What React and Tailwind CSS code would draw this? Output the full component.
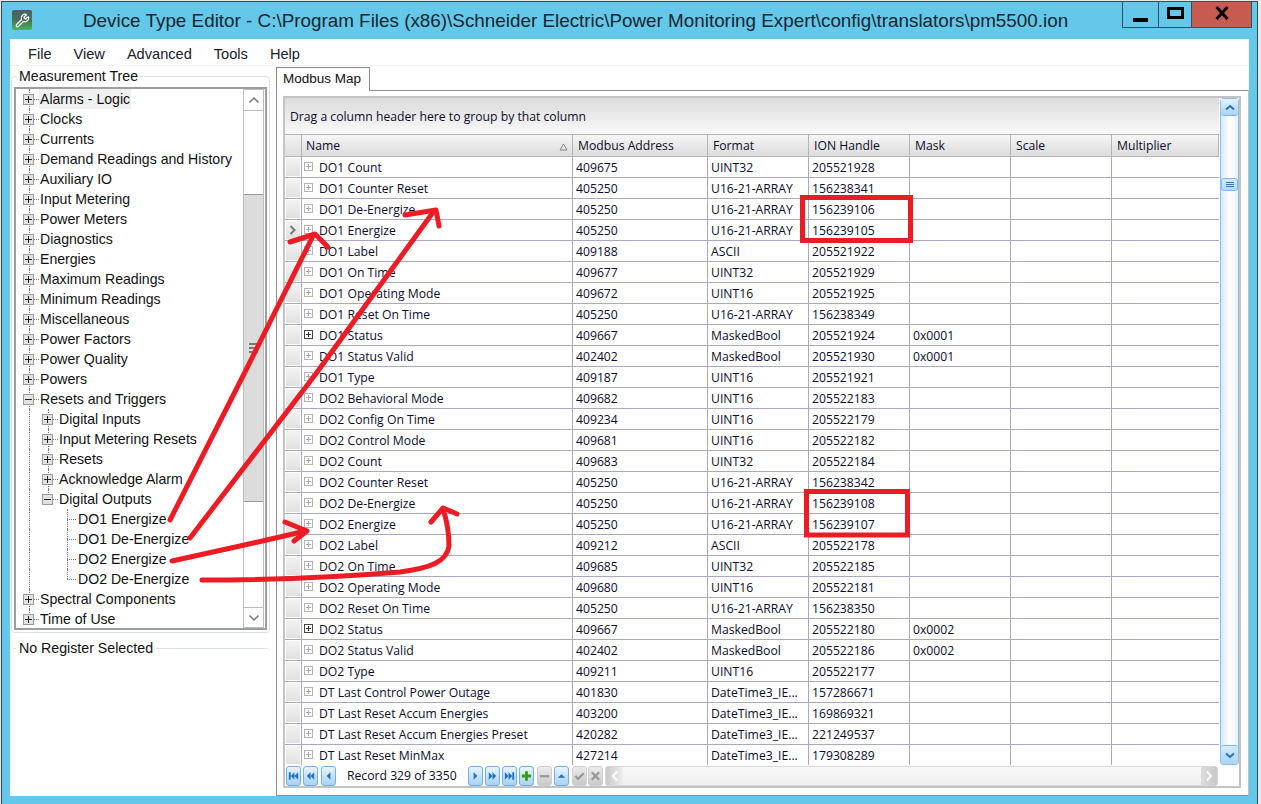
import React from 'react';
import { Wrench } from 'lucide-react';

const menus = ['File', 'View', 'Advanced', 'Tools', 'Help'];

const tree = [
    { label: 'Alarms - Logic', level: 0, icon: '+', selected: true },
    { label: 'Clocks', level: 0, icon: '+' },
    { label: 'Currents', level: 0, icon: '+' },
    { label: 'Demand Readings and History', level: 0, icon: '+' },
    { label: 'Auxiliary IO', level: 0, icon: '+' },
    { label: 'Input Metering', level: 0, icon: '+' },
    { label: 'Power Meters', level: 0, icon: '+' },
    { label: 'Diagnostics', level: 0, icon: '+' },
    { label: 'Energies', level: 0, icon: '+' },
    { label: 'Maximum Readings', level: 0, icon: '+' },
    { label: 'Minimum Readings', level: 0, icon: '+' },
    { label: 'Miscellaneous', level: 0, icon: '+' },
    { label: 'Power Factors', level: 0, icon: '+' },
    { label: 'Power Quality', level: 0, icon: '+' },
    { label: 'Powers', level: 0, icon: '+' },
    { label: 'Resets and Triggers', level: 0, icon: '-' },
    { label: 'Digital Inputs', level: 1, icon: '+' },
    { label: 'Input Metering Resets', level: 1, icon: '+' },
    { label: 'Resets', level: 1, icon: '+' },
    { label: 'Acknowledge Alarm', level: 1, icon: '+' },
    { label: 'Digital Outputs', level: 1, icon: '-', lastChild: true },
    { label: 'DO1 Energize', level: 2 },
    { label: 'DO1 De-Energize', level: 2 },
    { label: 'DO2 Energize', level: 2 },
    { label: 'DO2 De-Energize', level: 2, lastChild: true },
    { label: 'Spectral Components', level: 0, icon: '+' },
    { label: 'Time of Use', level: 0, icon: '+' },
];

const columns = [
    { name: 'Modbus Address', width: 'w-[135px]' },
    { name: 'Format', width: 'w-[101px]' },
    { name: 'ION Handle', width: 'w-[101px]' },
    { name: 'Mask', width: 'w-[101px]' },
    { name: 'Scale', width: 'w-[101px]' },
    { name: 'Multiplier', width: 'flex-1' },
];

const rows = [
    ['DO1 Count', '409675', 'UINT32', '205521928'],
    ['DO1 Counter Reset', '405250', 'U16-21-ARRAY', '156238341'],
    ['DO1 De-Energize', '405250', 'U16-21-ARRAY', '156239106'],
    ['DO1 Energize', '405250', 'U16-21-ARRAY', '156239105'],
    ['DO1 Label', '409188', 'ASCII', '205521922'],
    ['DO1 On Time', '409677', 'UINT32', '205521929'],
    ['DO1 Operating Mode', '409672', 'UINT16', '205521925'],
    ['DO1 Reset On Time', '405250', 'U16-21-ARRAY', '156238349'],
    ['DO1 Status', '409667', 'MaskedBool', '205521924', '0x0001'],
    ['DO1 Status Valid', '402402', 'MaskedBool', '205521930', '0x0001'],
    ['DO1 Type', '409187', 'UINT16', '205521921'],
    ['DO2 Behavioral Mode', '409682', 'UINT16', '205522183'],
    ['DO2 Config On Time', '409234', 'UINT16', '205522179'],
    ['DO2 Control Mode', '409681', 'UINT16', '205522182'],
    ['DO2 Count', '409683', 'UINT32', '205522184'],
    ['DO2 Counter Reset', '405250', 'U16-21-ARRAY', '156238342'],
    ['DO2 De-Energize', '405250', 'U16-21-ARRAY', '156239108'],
    ['DO2 Energize', '405250', 'U16-21-ARRAY', '156239107'],
    ['DO2 Label', '409212', 'ASCII', '205522178'],
    ['DO2 On Time', '409685', 'UINT32', '205522185'],
    ['DO2 Operating Mode', '409680', 'UINT16', '205522181'],
    ['DO2 Reset On Time', '405250', 'U16-21-ARRAY', '156238350'],
    ['DO2 Status', '409667', 'MaskedBool', '205522180', '0x0002'],
    ['DO2 Status Valid', '402402', 'MaskedBool', '205522186', '0x0002'],
    ['DO2 Type', '409211', 'UINT16', '205522177'],
    ['DT Last Control Power Outage', '401830', 'DateTime3_IE...', '157286671'],
    ['DT Last Reset Accum Energies', '403200', 'DateTime3_IE...', '169869321'],
    ['DT Last Reset Accum Energies Preset', '420282', 'DateTime3_IE...', '221249537'],
    ['DT Last Reset MinMax', '427214', 'DateTime3_IE...', '179308289'],
];

const BLUE = '#1f73c9';

const glyphs = {
    first: <path d="M2 3h2v8H2zM8 3v8L4 7zM12 3v8L8 7z" fill={BLUE} />,
    prevPage: <path d="M7 3v8L3 7zM11 3v8L7 7z" fill={BLUE} />,
    prev: <path d="M9 3v8L5 7z" fill={BLUE} />,
    next: <path d="M5 3v8l4-4z" fill={BLUE} />,
    nextPage: <path d="M3 3v8l4-4zM7 3v8l4-4z" fill={BLUE} />,
    last: <path d="M2 3v8l4-4zM6 3v8l4-4zM10 3h2v8h-2z" fill={BLUE} />,
    plus: <path d="M5.500 2h3v3.500H12v3H8.500V12h-3V8.500H2v-3h3.500z" fill="#3d9a12" />,
    minus: <path d="M2 6h10v2.500H2z" fill="#9a9a9a" />,
    up: <path d="M3 9l4-4 4 4z" fill={BLUE} />,
    check: <path d="M2.500 7l3 3 6-6" stroke="#9a9a9a" strokeWidth="2.500" fill="none" />,
    cross: <path d="M3 3l8 8M11 3l-8 8" stroke="#9a9a9a" strokeWidth="2.500" fill="none" />,
};

const NavButton = ({ glyph, gray, className = '' }) => (
    <div className={`w-[15px] h-[20px] rounded-[3px] border flex items-center justify-center shrink-0 ${gray ? 'border-[#d0d0d0] bg-gradient-to-b from-[#ececec] to-[#c9c9c9]' : 'border-[#6fb0ea] bg-gradient-to-b from-[#eaf4fd] to-[#a8d2f6]'} ${className}`}>
        <svg width="14" height="14" viewBox="0 0 14 14">{glyphs[glyph]}</svg>
    </div>
);

const Expander = ({ icon }) => (
    <span className="relative z-10 w-[11px] h-[11px] border border-[#9a9a9a] bg-[#e2e2e2] flex items-center justify-center shrink-0">
        <svg width="7" height="7" viewBox="0 0 7 7">
            <path d={icon === '+' ? 'M0 3.500h7M3.500 0v7' : 'M0 3.500h7'} stroke="#222" strokeWidth="1" />
        </svg>
    </span>
);

const TreeRow = ({ item, index }) => {
    const indent = item.level === 0 ? 'pl-[7px]' : item.level === 1 ? 'pl-[26px]' : 'pl-[61px]';
    const inResets = index > 15 && index <= 24;
    const inOutputs = index > 20 && index <= 24;
    return (
        <div className={`relative h-[20px] flex items-center ${indent}`}>
            {/* connector lines */}
            <span className={`absolute left-[13px] top-0 border-l border-dotted border-[#777] ${index === 26 ? 'h-[10px]' : 'h-[20px]'}`} />
            {inResets && index <= 20 && (
                <span className={`absolute left-[32px] top-0 border-l border-dotted border-[#777] ${index === 20 ? 'h-[10px]' : 'h-[20px]'}`} />
            )}
            {inOutputs && (
                <>
                    <span className={`absolute left-[51px] top-0 border-l border-dotted border-[#777] ${item.lastChild ? 'h-[10px]' : 'h-[20px]'}`} />
                    <span className="absolute left-[51px] top-[10px] w-[9px] border-t border-dotted border-[#777]" />
                </>
            )}
            {item.icon && <Expander icon={item.icon} />}
            {item.icon && <span className="w-[5px] border-t border-dotted border-[#777] shrink-0 relative z-10" />}
            <span className={`h-[20px] leading-[20px] px-[1px] text-[14.100px] text-[#111] whitespace-nowrap ${item.selected ? 'bg-[#f0f0f0]' : ''}`}>
                {item.label}
            </span>
        </div>
    );
};

const GridRow = ({ row, current }) => {
    const dark = row[0].endsWith('Status');
    return (
        <div className="h-[21px] flex border-b border-[#aaa8c2]">
            <div className="w-[17px] pl-[1px] pr-[1px] py-[1px] border-r border-[#aaa8c2] shrink-0">
                <div className="h-full bg-gradient-to-b from-[#f3f3f3] to-[#e1e1e1] flex items-center justify-center">
                    {current && (
                        <svg width="8" height="10" viewBox="0 0 8 10">
                            <path d="M1.500 1l4 4-4 4" stroke="#777" strokeWidth="2" fill="none" />
                        </svg>
                    )}
                </div>
            </div>
            <div className="w-[271px] flex items-center pl-[2px] pt-[2px] border-r border-[#aaa8c2] shrink-0">
                <span className={`w-[9px] h-[9px] border mb-[3px] flex items-center justify-center shrink-0 ${dark ? 'border-[#444]' : 'border-[#b5b5b5]'}`}>
                    <svg width="7" height="7" viewBox="0 0 7 7">
                        <path d="M1 3.500h5M3.500 1v5" stroke={dark ? '#333' : '#aaa'} strokeWidth="1" />
                    </svg>
                </span>
                <span className="ml-[6px] text-[#0c0c2a] whitespace-nowrap">{row[0]}</span>
            </div>
            {columns.map((col, i) => (
                <div key={col.name} className={`${col.width} flex items-center pl-[3px] pt-[2px] text-[#0c0c2a] whitespace-nowrap ${i < columns.length - 1 ? 'border-r border-[#aaa8c2] shrink-0' : ''}`}>
                    {row[i + 1]}
                </div>
            ))}
        </div>
    );
};

const HeaderCell = ({ width, className = 'pl-[5px]', children }) => (
    <div className={`${width} h-full flex items-center pt-[2px] border-r border-[#b5b5b5] bg-gradient-to-b from-[#f6f6f6] to-[#dcdcdc] text-[#0c0c2a] ${className} ${width === 'flex-1' ? '' : 'shrink-0'}`}>
        {children}
    </div>
);

const sysFont = { fontFamily: '"Liberation Sans", Arial, sans-serif' };

const App = () => {
    return (
        <div className="relative w-[1261px] h-[804px] overflow-hidden flex bg-[#e8e8e8] text-[12.200px]" style={{ fontFamily: '"Open Sans", "Noto Sans", sans-serif' }}>
            <div className="w-[1px] shrink-0" />

            {/* Window */}
            <div className="w-[1257px] h-[803px] mt-[1px] border-l border-t border-r border-[#3a4a58] bg-[#63c8ea] flex flex-col shrink-0">
                {/* Title bar */}
                <div className="h-[37px] flex shrink-0 relative">
                    <div className="ml-[10px] mt-[8px] w-[20px] h-[20px] rounded-[2px] bg-gradient-to-b from-[#4d5d66] via-[#47705a] to-[#44b84a] flex items-center justify-center shrink-0">
                        <Wrench size={15} color="#fff" strokeWidth={2} />
                    </div>
                    <div className="ml-[51px] h-[37px] leading-[37px] text-[18.850px] text-[#14262f] whitespace-nowrap" style={sysFont}>
                        Device Type Editor - C:\Program Files (x86)\Schneider Electric\Power Monitoring Expert\config\translators\pm5500.ion
                    </div>
                    <div className="ml-auto mr-[5px] h-[26px] flex border border-t-0 border-[#33505f] shrink-0">
                        <div className="w-[36px] flex items-center justify-center border-r border-[#33505f]">
                            <div className="w-[15px] h-[4px] bg-black mt-[10px]" />
                        </div>
                        <div className="w-[33px] flex items-center justify-center border-r border-[#33505f]">
                            <div className="w-[17px] h-[12px] border-[3px] border-black mb-[4px]" />
                        </div>
                        <div className="w-[59px] flex items-center justify-center bg-[#c75b50]">
                            <svg width="14" height="14" viewBox="0 0 14 14" className="mb-[3px]">
                                <path d="M1.500 1l11 12M12.500 1l-11 12" stroke="#000" strokeWidth="3" />
                            </svg>
                        </div>
                    </div>
                </div>

                {/* Client area */}
                <div className="mx-[8px] mb-[8px] flex-1 min-h-0 bg-white flex flex-col">
                    <div className="h-[27px] flex items-center gap-[22px] pl-[18px] pt-[6px] text-[14.600px] text-[#16202a] border-b border-[#f2f2f2] shrink-0" style={sysFont}>
                        {menus.map((m) => (
                            <span key={m}>{m}</span>
                        ))}
                    </div>

                    <div className="flex-1 min-h-0 flex">
                        {/* Left panel */}
                        <div className="w-[265px] shrink-0 flex flex-col pl-[1px] pr-[5px]" style={sysFont}>
                            <fieldset className="h-[567px] border border-[#dbe3e8] rounded-[4px] px-[2px] pt-[1px] pb-[2px] shrink-0 min-w-0">
                                <legend className="ml-[3px] px-[2px] h-[20px] leading-[20px] text-[14.200px] text-[#111]">Measurement Tree</legend>
                                <div className="h-[543px] border-2 border-[#9c9ea0] flex">
                                    <div className="w-[227px] shrink-0 overflow-hidden">
                                        {tree.map((item, i) => (
                                            <TreeRow key={item.label + i} item={item} index={i} />
                                        ))}
                                    </div>
                                    <div className="w-[21px] border border-[#bcbcbc] flex flex-col shrink-0">
                                        <div className="h-[21px] border-b border-[#bcbcbc] flex items-center justify-center shrink-0">
                                            <svg width="12" height="8" viewBox="0 0 12 8"><path d="M1.500 6.500L6 2l4.500 4.500" stroke="#777" strokeWidth="1.500" fill="none" /></svg>
                                        </div>
                                        <div className="h-[83px] shrink-0" />
                                        <div className="h-[308px] bg-[#dcdcdc] border-y border-[#9a9a9a] flex items-center justify-center shrink-0">
                                            <div className="w-[9px] h-[10px] border-y-2 border-[#777] flex items-center">
                                                <div className="w-full h-[2px] bg-[#777]" />
                                            </div>
                                        </div>
                                        <div className="flex-1" />
                                        <div className="h-[20px] border-t border-[#bcbcbc] flex items-center justify-center shrink-0">
                                            <svg width="12" height="8" viewBox="0 0 12 8"><path d="M1.500 1.500L6 6l4.500-4.500" stroke="#777" strokeWidth="1.500" fill="none" /></svg>
                                        </div>
                                    </div>
                                </div>
                            </fieldset>
                            <fieldset className="flex-1 mt-[5px] border-t border-[#dbe3e8] rounded-[4px] min-w-0">
                                <legend className="ml-[5px] px-[3px] h-[20px] leading-[20px] text-[14.200px] text-[#111]">No Register Selected</legend>
                            </fieldset>
                        </div>

                        {/* Right panel */}
                        <div className="flex-1 min-w-0 flex flex-col pl-[1px] mt-[1px]">
                            <div className="w-[94px] h-[24px] border border-b-0 border-[#8a8a8a] bg-white flex items-center pl-[6px] text-[13.500px] text-[#111] shrink-0 relative z-10 -mb-[1px]" style={sysFont}>
                                Modbus Map
                            </div>
                            <div className="flex-1 min-h-0 border border-[#8f8f8f] border-r-[#c0c0c0] pl-[6px] pr-[7px] pt-[5px] pb-[7px]">
                                <div className="w-[958px] h-full border-2 border-[#c4c4c4] flex flex-col">
                                    <div className="flex-1 min-h-0 flex">
                                        <div className="w-[934px] shrink-0 flex flex-col">
                                            <div className="h-[36px] bg-gradient-to-b from-[#dcdcdc] to-[#f9f9f9] flex items-center pl-[5px] pt-[2px] text-[#0c0c2a] shrink-0">
                                                Drag a column header here to group by that column
                                            </div>
                                            <div className="h-[23px] flex border-y border-[#b5b5b5] shrink-0">
                                                <div className="w-[17px] h-full border-r border-[#b5b5b5] bg-gradient-to-b from-[#f3f3f3] to-[#dedede] shrink-0" />
                                                <HeaderCell width="w-[271px]" className="pl-[4px]">
                                                    <span className="flex-1">Name</span>
                                                    <svg width="9" height="8" viewBox="0 0 9 8" className="mr-[4px]"><path d="M4.500 1L8 7H1z" fill="none" stroke="#888" /></svg>
                                                </HeaderCell>
                                                {columns.map((col) => (
                                                    <HeaderCell key={col.name} width={col.width}>{col.name}</HeaderCell>
                                                ))}
                                            </div>
                                            <div className="flex-1 min-h-0 overflow-hidden">
                                                {rows.map((row, i) => (
                                                    <GridRow key={row[0]} row={row} current={i === 3} />
                                                ))}
                                            </div>
                                        </div>
                                        {/* Vertical scrollbar */}
                                        <div className="w-[19px] ml-[1px] border border-[#8dc0ee] rounded-[3px] bg-gradient-to-r from-[#d5e9fb] via-[#ffffff] to-[#e6f2fd] flex flex-col shrink-0">
                                            <div className="h-[17px] border-b border-[#7db8ec] rounded-b-[3px] bg-gradient-to-b from-[#e6f2fd] to-[#a9d3f7] flex items-center justify-center shrink-0">
                                                <svg width="10" height="7" viewBox="0 0 10 7"><path d="M1 5.500L5 2l4 3.500" stroke={BLUE} strokeWidth="2" fill="none" /></svg>
                                            </div>
                                            <div className="h-[62px] shrink-0" />
                                            <div className="h-[13px] border border-[#7db8ec] rounded-[3px] bg-gradient-to-b from-[#d7ebfc] to-[#b6dbf9] flex flex-col items-center justify-center gap-[1px] shrink-0">
                                                <div className="w-[8px] h-[1px] bg-[#2a78c9]" />
                                                <div className="w-[8px] h-[1px] bg-[#2a78c9]" />
                                                <div className="w-[8px] h-[1px] bg-[#2a78c9]" />
                                            </div>
                                            <div className="flex-1" />
                                            <div className="h-[19px] border-t border-[#7db8ec] rounded-t-[3px] bg-gradient-to-b from-[#d6eafc] to-[#a9d3f7] flex items-center justify-center shrink-0">
                                                <svg width="10" height="7" viewBox="0 0 10 7"><path d="M1 1.500L5 5l4-3.500" stroke={BLUE} strokeWidth="2" fill="none" /></svg>
                                            </div>
                                        </div>
                                    </div>

                                    {/* Footer navigator */}
                                    <div className="h-[21px] flex items-center pl-[1px] shrink-0">
                                        <NavButton glyph="first" />
                                        <NavButton glyph="prevPage" className="ml-[2px]" />
                                        <NavButton glyph="prev" className="ml-[3px]" />
                                        <span className="w-[132px] pl-[11px] pt-[2px] text-[#0c0c2a] whitespace-nowrap shrink-0">Record 329 of 3350</span>
                                        <NavButton glyph="next" />
                                        <NavButton glyph="nextPage" className="ml-[2px]" />
                                        <NavButton glyph="last" className="ml-[2px]" />
                                        <NavButton glyph="plus" className="ml-[2px]" />
                                        <NavButton glyph="minus" gray className="ml-[3px]" />
                                        <NavButton glyph="up" className="ml-[2px]" />
                                        <NavButton glyph="check" gray className="ml-[3px]" />
                                        <NavButton glyph="cross" gray className="ml-[1px]" />
                                        <div className="w-[613px] h-[20px] ml-[2px] border border-[#d8d8d8] rounded-[3px] bg-gradient-to-b from-[#f9f9f9] to-[#efefef] flex justify-between shrink-0">
                                            <div className="w-[17px] h-full bg-gradient-to-r from-[#c9c9c9] to-[#eeeeee] flex items-center justify-center">
                                                <svg width="8" height="12" viewBox="0 0 8 12"><path d="M6 1.500L2 6l4 4.500" stroke="#fff" strokeWidth="2" fill="none" /></svg>
                                            </div>
                                            <div className="w-[16px] h-full bg-gradient-to-r from-[#dddddd] to-[#c9c9c9] flex items-center justify-center">
                                                <svg width="8" height="12" viewBox="0 0 8 12"><path d="M2 1.500L6 6l-4 4.500" stroke="#fff" strokeWidth="2" fill="none" /></svg>
                                            </div>
                                        </div>
                                    </div>
                                </div>
                            </div>
                        </div>
                    </div>
                </div>
            </div>

            {/* Red annotations drawn on top of the screenshot */}
            <svg className="absolute left-0 top-0 pointer-events-none" width="1261" height="804" viewBox="0 0 1261 804" fill="none" stroke="#ed1c24" strokeWidth="5" strokeLinecap="round" strokeLinejoin="round">
                <path d="M170 520L246 370L313 236" />
                <path d="M290 242L315 234L328 247" />
                <path d="M190 538L315 375L434 211" />
                <path d="M405 215L436 210L439 226" />
                <path d="M172 561L240 546L306 531" />
                <path d="M285 522L307 531L294 541" />
                <path d="M202 580C260 580 330 578 400 572C430 568 447 562 449 546C449 532 446 518 443 509" />
                <path d="M431 522L443 508L457 514" />
                <rect x="802.500" y="197.500" width="108" height="43" strokeWidth="5" strokeLinecap="butt" strokeLinejoin="miter" />
                <rect x="806.500" y="491.500" width="101" height="43.500" strokeWidth="5" strokeLinecap="butt" strokeLinejoin="miter" />
            </svg>
        </div>
    );
};

export default App;
